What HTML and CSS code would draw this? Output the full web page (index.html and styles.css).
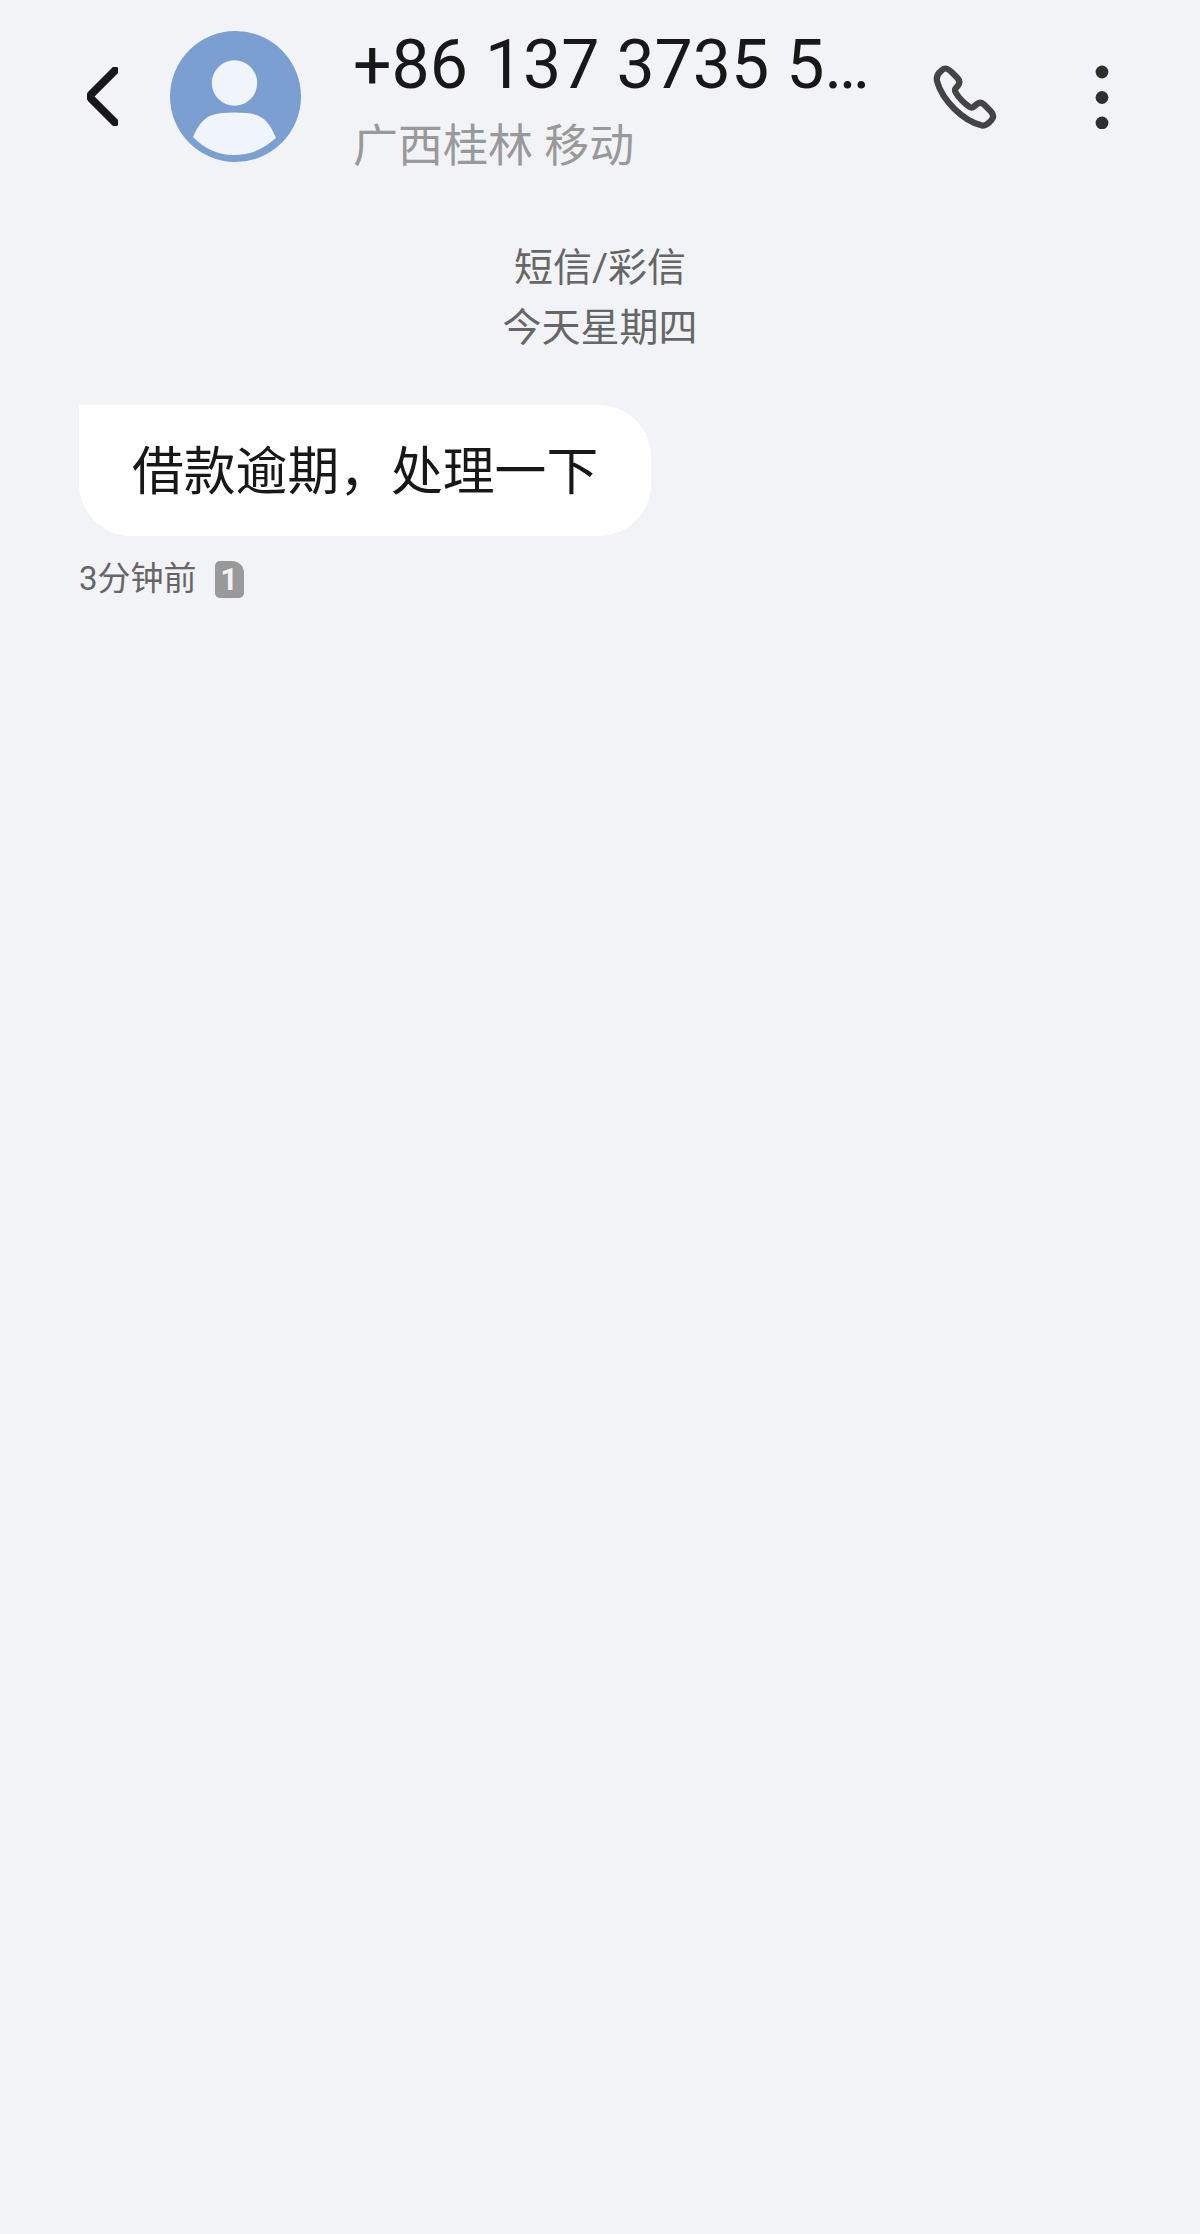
FILE: index.html

```html
<!DOCTYPE html>
<html lang="zh-CN">

<head>
  <meta charset="UTF-8" />
  <meta name="viewport" content="width=device-width, initial-scale=1.0" />
  <title>短信</title>
  <link rel="stylesheet" href="styles.css">
</head>

<body>
  <header class="topbar">
    <svg class="back" viewBox="0 0 31 59" aria-hidden="true">
      <path d="M28 3.5 L4.5 27 Q2.5 29.5 4.5 32 L28 55.5" />
    </svg>

    <svg class="avatar" viewBox="0 0 131 131" aria-hidden="true">
      <circle class="avatar-bg" cx="65.5" cy="65.5" r="65.5" />
      <circle class="avatar-fg" cx="64.5" cy="52" r="22.7" />
      <path class="avatar-fg" d="M23 106 C30 90 37 83 53 82 Q64 81 76 82 C92 83 99 90 106 107 C92 119 80 124 64 124 C48 124 35 118 23 106 Z" />
    </svg>

    <div class="contact">
      <div class="contact-number">+86 137 3735 5…</div>
      <div class="contact-place">广西桂林 移动</div>
    </div>

    <svg class="phone" viewBox="0 0 64 64" aria-hidden="true">
      <path d="M12 3.5 C15 3.5 17 5.5 19 7.5 L24 12.5 C27 15.5 27 18 25 20.5 L22.5 23.5 C21.5 25 22 26.5 23 28 C26 33 31 38 36 41.5 C38 43 39.5 43 41 41.5 L44 39 C46.5 37 49 37.5 51 39.5 L57.5 46 C60.5 49 61 52 58.5 55 C56 58 53 61 49 60.5 C30 56 9 35 4 16 C3 11 5.5 8 8 6 C9.5 4.5 10.5 3.5 12 3.5 Z" />
    </svg>

    <svg class="more" viewBox="0 0 14 64" aria-hidden="true">
      <circle cx="7" cy="7" r="6.4" />
      <circle cx="7" cy="32.5" r="6.4" />
      <circle cx="7" cy="58" r="6.4" />
    </svg>
  </header>

  <main class="thread">
    <div class="thread-info">
      <div>短信/彩信</div>
      <div>今天星期四</div>
    </div>

    <div class="bubble">借款逾期，处理一下</div>

    <div class="meta">
      <span>3分钟前</span>
      <span class="sim">1</span>
    </div>
  </main>
</body>

</html>
```

FILE: styles.css

```css
body {
  margin: 0;
  padding: 0;
  min-height: 2234px;
  font-family: "Roboto", "Noto Sans CJK SC", sans-serif;
  background-color: #f1f3f7;
  color: #181818;
  overflow-x: hidden;
}

.topbar {
  display: flex;
  align-items: center;
  height: 131px;
  padding: 31px 0 0 87px;
}

.back {
  flex: none;
  width: 31px;
  height: 59px;
  margin-right: 52px;
}

.back path {
  fill: none;
  stroke: #181818;
  stroke-width: 8;
  stroke-linecap: round;
  stroke-linejoin: round;
}

.avatar {
  flex: none;
  width: 131px;
  height: 131px;
  margin-right: 52px;
}

.avatar-bg {
  fill: #7b9fd1;
}

.avatar-fg {
  fill: #f0f4fb;
}

.contact {
  flex: none;
  width: 580px;
  padding-top: 9px;
}

.contact-number {
  font-size: 68px;
  line-height: 80px;
  white-space: nowrap;
}

.contact-place {
  margin-top: 12px;
  font-size: 45px;
  line-height: 60px;
  color: #999999;
}

.phone {
  flex: none;
  width: 64px;
  height: 64px;
  margin-right: 98px;
}

.phone path {
  fill: none;
  stroke: #444444;
  stroke-width: 6.2;
  stroke-linejoin: round;
}

.more {
  flex: none;
  width: 14px;
  height: 64px;
}

.more circle {
  fill: #2e2e2e;
}

.thread {
  padding: 76px 0 0 79px;
}

.thread-info {
  margin-left: -79px;
  font-size: 39px;
  line-height: 60px;
  text-align: center;
  color: #666666;
}

.bubble {
  display: inline-block;
  margin-top: 47px;
  padding: 5px 53px 0;
  font-size: 51.8px;
  line-height: 126px;
  background-color: #ffffff;
  border-radius: 0 52px 52px 52px;
}

.meta {
  display: flex;
  align-items: center;
  gap: 18px;
  margin-top: 20px;
  font-size: 33px;
  line-height: 46px;
  color: #666666;
}

.sim {
  width: 29px;
  height: 37px;
  font-family: "Roboto", sans-serif;
  font-size: 31px;
  font-weight: 700;
  line-height: 37px;
  text-align: center;
  color: #f1f3f7;
  background-color: #999999;
  border-radius: 5px 12px 5px 5px;
}
```
